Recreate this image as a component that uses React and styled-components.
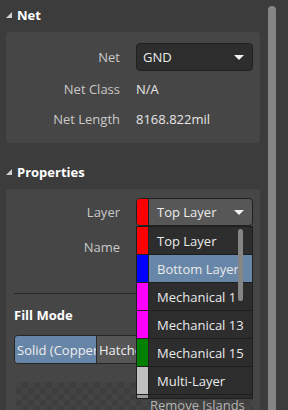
import styled, { createGlobalStyle } from 'styled-components'

const GlobalStyle = createGlobalStyle`
  html, body { margin: 0; padding: 0; }
  body {
    background: #3c3c3c;
    font-family: "Open Sans", "Noto Sans", sans-serif;
    font-size: 13px;
    color: #e4e4e4;
    overflow: hidden;
  }
`

const Panel = styled.div`
  width: 288px;
  height: 410px;
  display: flex;
  overflow: hidden;
  background: #3c3c3c;
`

const Main = styled.div`
  flex: 1;
  padding: 4px 1px 0 6px;
  display: flex;
  flex-direction: column;
  overflow: hidden;
  & > * { flex-shrink: 0; }
`

const ScrollCol = styled.div`
  width: 27px;
  display: flex;
  justify-content: center;
  padding-top: 6px;
  padding-right: 6px;
  box-sizing: border-box;
`

const Thumb = styled.div`
  width: 8px;
  height: 420px;
  flex-shrink: 0;
  border-radius: 4px;
  background: #858585;
`

const Header = styled.div`
  height: 22px;
  display: flex;
  align-items: center;
  gap: 5px;
  font-weight: 700;
  color: #ffffff;
  margin-top: ${p => p.$top || 0}px;
  margin-bottom: 6px;
`

const Card = styled.div`
  background: #464646;
  border-radius: 4px;
  padding: ${p => p.$pt || 11}px 7px 12px 8px;
  display: flex;
  flex-direction: column;
  gap: 6px;
  flex: ${p => (p.$grow ? '1 0 auto' : 'none')};
  & > * { flex-shrink: 0; }
`

const Row = styled.div`
  display: grid;
  grid-template-columns: 106px 117px;
  column-gap: 16px;
  align-items: center;
  height: ${p => p.$h || 24}px;
  margin-top: ${p => p.$mt || 0}px;
`

const Label = styled.div`
  text-align: right;
  color: #c9c9c9;
`

const Value = styled.div`
  color: #e6e6e6;
  position: relative;
`

const Select = styled.div`
  height: 28px;
  box-sizing: border-box;
  display: flex;
  align-items: center;
  border: 1px solid #202020;
  border-radius: 4px;
  background: ${p => (p.$open ? '#575757' : '#2d2d2d')};
  color: #ececec;
  overflow: hidden;
`

const Swatch = styled.div`
  width: 11px;
  align-self: stretch;
  background: ${p => p.$c};
  border-right: 1px solid #222;
`

const SelectText = styled.div`
  flex: 1;
  padding-left: ${p => (p.$swatch ? 8 : 6)}px;
`

const Caret = styled.div`
  width: 0;
  height: 0;
  border-left: 5px solid transparent;
  border-right: 5px solid transparent;
  border-top: 5px solid #f2f2f2;
  margin-right: 8px;
`

const Menu = styled.div`
  position: absolute;
  left: 0;
  top: 28px;
  width: 117px;
  height: 173px;
  box-sizing: border-box;
  border: 1px solid #1e1e1e;
  background: #2d2d2d;
  overflow: hidden;
  z-index: 5;
`

const MenuItem = styled.div`
  height: 27px;
  display: flex;
  align-items: center;
  border-bottom: 1px solid #1e1e1e;
  background: ${p => (p.$active ? '#6786a8' : '#2d2d2d')};
  color: #eaeaea;
  white-space: nowrap;
`

const MenuScroll = styled.div`
  position: absolute;
  right: 9px;
  top: 2px;
  width: 5px;
  height: 72px;
  border-radius: 3px;
  background: #858585;
`

const Divider = styled.div`
  height: 1px;
  background: #2a2a2a;
  margin-top: 26px;
  margin-right: 2px;
`

const SubTitle = styled.div`
  font-weight: 700;
  color: #ffffff;
  margin-top: 6px;
`

const Segmented = styled.div`
  display: flex;
  height: 29px;
  box-sizing: border-box;
  border: 1px solid #262626;
  border-radius: 4px;
  overflow: hidden;
  margin-top: 5px;
  margin-right: 2px;
`

const Segment = styled.div`
  width: ${p => p.$w}px;
  flex: none;
  display: flex;
  align-items: center;
  padding-left: 2px;
  white-space: nowrap;
  overflow: hidden;
  background: ${p => (p.$active ? '#6785a6' : '#565656')};
  border-right: 1px solid #2b2b2b;
  color: #eeeeee;
`

const Checker = styled.div`
  margin-top: 12px;
  margin-left: 2px;
  flex: 1;
  min-height: 40px;
  background-color: #444444;
  background-image:
    linear-gradient(45deg, #3e3e3e 25%, transparent 25%, transparent 75%, #3e3e3e 75%),
    linear-gradient(45deg, #3e3e3e 25%, transparent 25%, transparent 75%, #3e3e3e 75%);
  background-size: 12px 12px;
  background-position: 0 0, 6px 6px;
  padding-left: 134px;
  padding-top: 14px;
  color: #b4b4b4;
  white-space: nowrap;
`

const Tri = () => (
  <svg width="6" height="6" viewBox="0 0 6 6">
    <polygon points="6,0 6,6 0,6" fill="#d0d0d0" />
  </svg>
)

const layers = [
  { name: 'Top Layer', color: '#ff0000' },
  { name: 'Bottom Layer', color: '#0000ff', active: true },
  { name: 'Mechanical 1', color: '#ff00ff' },
  { name: 'Mechanical 13', color: '#ff00ff' },
  { name: 'Mechanical 15', color: '#008000' },
  { name: 'Multi-Layer', color: '#c0c0c0' },
  { name: 'Keep-Out Layer', color: '#9a9a9a' },
]

export default function App() {
  return (
    <Panel>
      <GlobalStyle />
      <Main>
        <Header><Tri />Net</Header>
        <Card>
          <Row $h={28}>
            <Label>Net</Label>
            <Select>
              <SelectText>GND</SelectText>
              <Caret />
            </Select>
          </Row>
          <Row>
            <Label>Net Class</Label>
            <Value>N/A</Value>
          </Row>
          <Row>
            <Label>Net Length</Label>
            <Value>8168.822mil</Value>
          </Row>
        </Card>

        <Header $top={18}><Tri />Properties</Header>
        <Card $pt={9} $grow>
          <Row $h={28}>
            <Label>Layer</Label>
            <Value>
              <Select $open>
                <Swatch $c="#ff0000" />
                <SelectText $swatch>Top Layer</SelectText>
                <Caret />
              </Select>
              <Menu>
                {layers.map(l => (
                  <MenuItem key={l.name} $active={l.active}>
                    <Swatch $c={l.color} />
                    <SelectText $swatch>{l.name}</SelectText>
                  </MenuItem>
                ))}
                <MenuScroll />
              </Menu>
            </Value>
          </Row>
          <Row $h={28} $mt={1}>
            <Label>Name</Label>
            <Value />
          </Row>
          <Divider />
          <SubTitle>Fill Mode</SubTitle>
          <Segmented>
            <Segment $w={79} $active>Solid (Copper Regions)</Segment>
            <Segment $w={90}>Hatched (Tracks/Arcs)</Segment>
            <Segment $w={60}>None</Segment>
          </Segmented>
          <Checker>Remove Islands</Checker>
        </Card>
      </Main>
      <ScrollCol>
        <Thumb />
      </ScrollCol>
    </Panel>
  )
}
